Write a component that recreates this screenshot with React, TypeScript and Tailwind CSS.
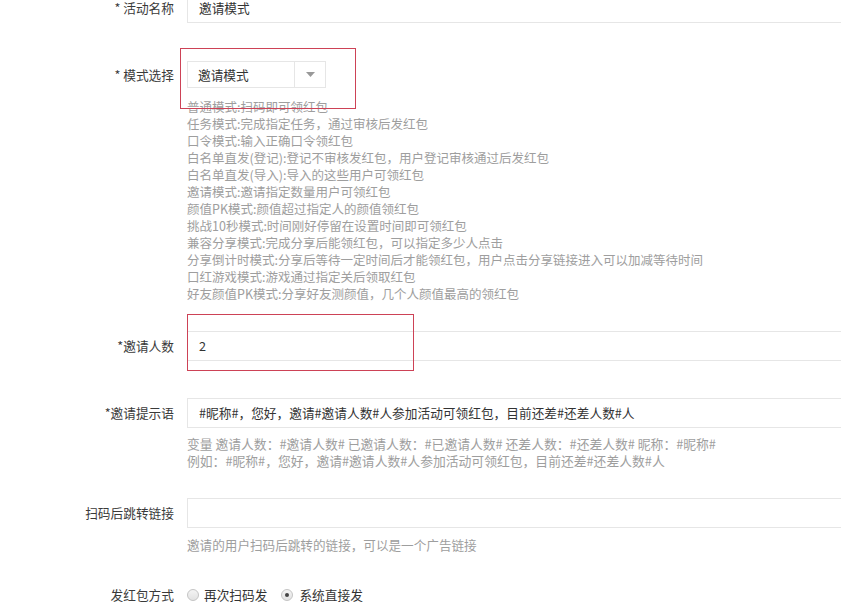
import React from "react";

const font = { fontFamily: '"Noto Sans CJK SC", "Microsoft YaHei", sans-serif' };

const modes = [
  "普通模式:扫码即可领红包",
  "任务模式:完成指定任务，通过审核后发红包",
  "口令模式:输入正确口令领红包",
  "白名单直发(登记):登记不审核发红包，用户登记审核通过后发红包",
  "白名单直发(导入):导入的这些用户可领红包",
  "邀请模式:邀请指定数量用户可领红包",
  "颜值PK模式:颜值超过指定人的颜值领红包",
  "挑战10秒模式:时间刚好停留在设置时间即可领红包",
  "兼容分享模式:完成分享后能领红包，可以指定多少人点击",
  "分享倒计时模式:分享后等待一定时间后才能领红包，用户点击分享链接进入可以加减等待时间",
  "口红游戏模式:游戏通过指定关后领取红包",
  "好友颜值PK模式:分享好友测颜值，几个人颜值最高的领红包",
];

function Label({ children, h = "h-[31px]" }: { children: React.ReactNode; h?: string }) {
  return (
    <div className={`w-[174px] shrink-0 ${h} flex items-center justify-end text-[12.7px] text-[#3a3a3a] whitespace-nowrap`}>
      {children}
    </div>
  );
}

function Input({ value, h = "h-[31px]" }: { value?: string; h?: string }) {
  return (
    <div className={`w-[720px] shrink-0 ${h} border border-[#e6e6e6] bg-white flex items-center px-[11px] text-[12.7px] text-[#333] whitespace-nowrap`}>
      {value}
    </div>
  );
}

function Radio({ checked }: { checked?: boolean }) {
  return (
    <span className="w-[12px] h-[12px] rounded-full border border-[#c4c4c4] bg-gradient-to-b from-[#f4f4f4] to-[#e2e2e2] flex items-center justify-center">
      {checked && <span className="w-[4px] h-[4px] rounded-full bg-[#444]" />}
    </span>
  );
}

export default function App() {
  return (
    <div className="w-[841px] h-[614px] overflow-hidden bg-white relative" style={font}>
      <div className="flex flex-col">
        {/* 活动名称 */}
        <div className="flex -mt-[8px]">
          <Label>* 活动名称</Label>
          <div className="ml-[13px]">
            <Input value="邀请模式" />
          </div>
        </div>

        {/* 模式选择 */}
        <div className="flex mt-[38px]">
          <Label h="h-[27px]">* 模式选择</Label>
          <div className="ml-[13px] flex flex-col">
            <div className="w-[139px] h-[27px] border border-[#e6e6e6] flex items-center text-[12.7px] text-[#333]">
              <span className="flex-1 pl-[10px]">邀请模式</span>
              <span className="w-[31px] h-full border-l border-[#e6e6e6] flex items-center justify-center">
                <svg width="9" height="5" viewBox="0 0 9 5">
                  <path d="M0 0 L9 0 L4.5 5 Z" fill="#999" />
                </svg>
              </span>
            </div>
            <div className="mt-[10px] text-[12.5px] leading-[17px] text-[#9e9e9e] whitespace-nowrap">
              {modes.map((m) => (
                <div key={m}>{m}</div>
              ))}
            </div>
          </div>
        </div>

        {/* 邀请人数 */}
        <div className="flex mt-[29px]">
          <Label h="h-[30px]">*邀请人数</Label>
          <div className="ml-[13px]">
            <Input value="2" h="h-[30px]" />
          </div>
        </div>

        {/* 邀请提示语 */}
        <div className="flex mt-[37px]">
          <Label h="h-[30px]">*邀请提示语</Label>
          <div className="ml-[13px] flex flex-col">
            <Input value="#昵称#，您好，邀请#邀请人数#人参加活动可领红包，目前还差#还差人数#人" h="h-[30px]" />
            <div className="mt-[7px] text-[12.8px] leading-[17px] text-[#9e9e9e] whitespace-nowrap">
              <div>变量 邀请人数：#邀请人数# 已邀请人数：#已邀请人数# 还差人数：#还差人数# 昵称：#昵称#</div>
              <div>例如：#昵称#，您好，邀请#邀请人数#人参加活动可领红包，目前还差#还差人数#人</div>
            </div>
          </div>
        </div>

        {/* 扫码后跳转链接 */}
        <div className="flex mt-[29px]">
          <Label h="h-[30px]">扫码后跳转链接</Label>
          <div className="ml-[13px] flex flex-col">
            <Input h="h-[30px]" />
            <div className="mt-[8px] text-[12.6px] leading-[17px] text-[#9e9e9e] whitespace-nowrap">
              邀请的用户扫码后跳转的链接，可以是一个广告链接
            </div>
          </div>
        </div>

        {/* 发红包方式 */}
        <div className="flex mt-[33px]">
          <Label h="h-[17px]">发红包方式</Label>
          <div className="ml-[13px] flex items-center h-[17px] text-[12.7px] text-[#333]">
            <Radio />
            <span className="ml-[5px]">再次扫码发</span>
            <span className="ml-[14px]">
              <Radio checked />
            </span>
            <span className="ml-[6px]">系统直接发</span>
          </div>
        </div>
      </div>

      {/* annotation boxes */}
      <div className="absolute left-[180px] top-[48px] w-[176px] h-[61px] border border-[#cd4256] pointer-events-none" />
      <div className="absolute left-[187px] top-[314px] w-[227px] h-[57px] border border-[#cd4256] pointer-events-none" />
    </div>
  );
}
